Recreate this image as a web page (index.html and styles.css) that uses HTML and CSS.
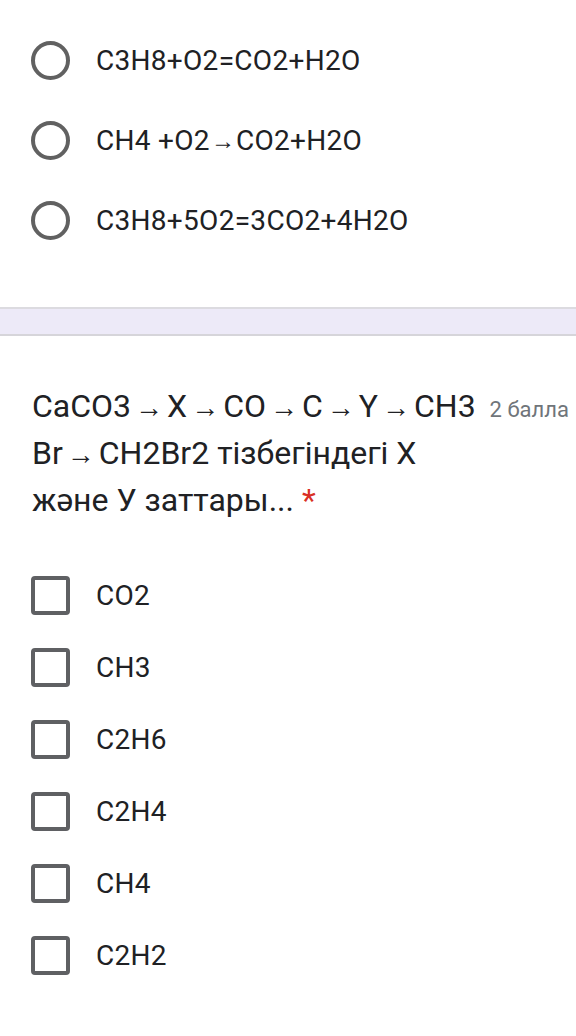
FILE: index.html
```html
<!DOCTYPE html>
<html lang="kk">
<head>
<meta charset="utf-8">
<link rel="stylesheet" href="styles.css">
</head>
<body>
<div class="card card-bottom">
  <ul class="options">
    <li class="option"><span class="radio"></span><span class="label">C3H8+O2=CO2+H2O</span></li>
    <li class="option"><span class="radio"></span><span class="label">CH4 +O2<span class="arr">→</span>CO2+H2O</span></li>
    <li class="option"><span class="radio"></span><span class="label">C3H8+5O2=3CO2+4H2O</span></li>
  </ul>
</div>
<div class="band"></div>
<div class="card card-top">
  <div class="question">
    <div class="title">CaCO3<span class="arr">→</span>X<span class="arr">→</span>CO<span class="arr">→</span>C<span class="arr">→</span>Y<span class="arr">→</span>CH3 <span class="points">2 балла</span><br>Br<span class="arr">→</span>CH2Br2 тізбегіндегі Х<br>және У заттары... <span class="req">*</span></div>
  </div>
  <ul class="options checks">
    <li class="option"><span class="box"></span><span class="label">CO2</span></li>
    <li class="option"><span class="box"></span><span class="label">CH3</span></li>
    <li class="option"><span class="box"></span><span class="label">C2H6</span></li>
    <li class="option"><span class="box"></span><span class="label">C2H4</span></li>
    <li class="option"><span class="box"></span><span class="label">CH4</span></li>
    <li class="option"><span class="box"></span><span class="label">C2H2</span></li>
  </ul>
</div>
</body>
</html>
```

FILE: styles.css
```css
html, body {
  margin: 0;
  padding: 0;
  background: #ffffff;
  font-family: Roboto, "Noto Sans", Arial, sans-serif;
  color: #202124;
  overflow: hidden;
}
body {
  width: 576px;
  height: 1036px;
}
.card {
  background: #fff;
}
.card-bottom {
  padding-top: 20px;
  padding-bottom: 47px;
  border-bottom: 2px solid #dcdbe0;
}
.band {
  height: 25px;
  background: #edeaf8;
}
.card-top {
  border-top: 2px solid #d6d5da;
  padding-top: 47px;
}
.options {
  list-style: none;
  margin: 0;
  padding: 0;
}
.option {
  display: flex;
  align-items: center;
  height: 80px;
  padding-left: 31px;
}
.checks {
  margin-top: 35px;
}
.checks .option {
  height: 72px;
}
.radio {
  box-sizing: border-box;
  width: 39px;
  height: 39px;
  border: 4px solid #616161;
  border-radius: 50%;
  flex: none;
}
.box {
  box-sizing: border-box;
  width: 39px;
  height: 39px;
  border: 4px solid #5f6063;
  border-radius: 4px;
  flex: none;
}
.label {
  margin-left: 26px;
  font-size: 28px;
  letter-spacing: 0.3px;
  color: #202124;
}
.label .arr {
  font-size: 24px;
  line-height: 1;
  margin: 0 1px;
  vertical-align: 1px;
  letter-spacing: 0;
}
.question {
  padding-left: 32px;
}
.title {
  font-size: 32px;
  line-height: 47px;
  white-space: nowrap;
  color: #202124;
}
.title .arr {
  font-size: 28px;
  line-height: 1;
  margin: 0 4px;
  vertical-align: 0;
}
.points {
  font-size: 22px;
  line-height: 1;
  color: #70757a;
  margin-left: 6px;
}
.req {
  color: #d93025;
}
```
